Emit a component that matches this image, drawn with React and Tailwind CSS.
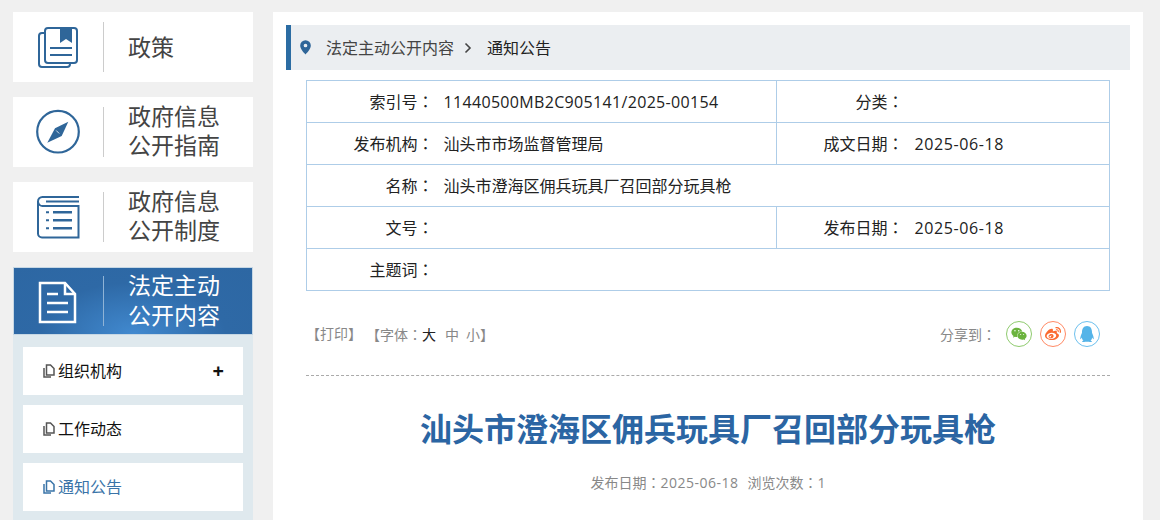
import { FaWeixin, FaWeibo, FaQq } from 'react-icons/fa';

const BookIcon = () => (
  <svg width="90" height="70" viewBox="0 0 90 70" fill="none" stroke="#2f6699" strokeWidth="2">
    <path d="M32 21h-3a3 3 0 0 0-3 3v28a3 3 0 0 0 3 3h25a3 3 0 0 0 3-3v-1" />
    <rect x="32" y="16" width="32" height="35" rx="3" />
    <path d="M47 16h12v15l-6-4-6 4z" fill="#2f6699" stroke="none" />
    <path d="M37 36h22M37 43h22" />
  </svg>
);

const CompassIcon = () => (
  <svg width="90" height="70" viewBox="0 0 90 70" fill="none">
    <circle cx="45" cy="34.700" r="20.800" stroke="#2f6699" strokeWidth="2.200" />
    <path d="M55.300 24.700L48.700 39 34.300 45.700 42 31.300z" fill="#2f6699" />
    <path d="M43.200 33.500l3 3" stroke="#fff" strokeWidth="0.800" />
  </svg>
);

const ListIcon = () => (
  <svg width="90" height="70" viewBox="0 0 90 70" fill="none" stroke="#2f6699" strokeWidth="2">
    <path d="M66 15H29.500a4.500 4.500 0 0 0-4.500 4.500V51.500a4 4 0 0 0 4 4H65.500V24H30a4.500 4.500 0 0 1-5-4.500" />
    <path d="M33 19.500h33" />
    <path d="M40 30.300h19M40 38.300h19M40 46.300h19" strokeWidth="2.500" />
    <path d="M33 30.300h3M33 38.300h3M33 46.300h3" />
  </svg>
);

const DocIcon = () => (
  <svg width="90" height="68" viewBox="0 0 90 68" fill="none" stroke="#fff" strokeWidth="2.500">
    <path d="M27 16h25l10 11v28H27z" />
    <path d="M52 16v11h10" />
    <path d="M34 27h11M34 36h21M34 45h21" />
  </svg>
);

const PageIcon = ({ color }) => (
  <svg width="12" height="14" viewBox="0 0 12 14" fill="none" stroke={color} strokeWidth="1.500" className="shrink-0">
    <path d="M1 4v9h7" />
    <path d="M3.500 1h4L11 4.500V11H3.500z" />
  </svg>
);

const PinIcon = () => (
  <svg width="11" height="15" viewBox="0 0 12 16">
    <path fillRule="evenodd" fill="#2f6699" d="M6 0a5.800 5.800 0 0 1 5.800 5.800C11.800 9.500 8 13.500 6 15.500 4 13.500.2 9.500.2 5.800A5.800 5.800 0 0 1 6 0zm0 3.800a2 2 0 1 0 0 4 2 2 0 0 0 0-4z" />
  </svg>
);

// the SC face sits this colon in the corner of its cell, the reference has it centred
const Colon = () => <span className="font-['Noto_Sans_CJK_TC']">：</span>;

const navItems = [
  { icon: <BookIcon />, lines: ['政策'] },
  { icon: <CompassIcon />, lines: ['政府信息', '公开指南'] },
  { icon: <ListIcon />, lines: ['政府信息', '公开制度'] },
];

const Label = ({ children }) => (
  <td className="border-y border-l border-[#aecde8] text-right">
    {children}<Colon />
  </td>
);

const Value = ({ children, colSpan, className = 'pl-[10px]' }) => (
  <td colSpan={colSpan} className={`border-y border-r border-[#aecde8] ${className}`}>{children}</td>
);

export default function App() {
  return (
    <div
      className="flex h-[520px] w-[1160px] overflow-hidden bg-[#f0f0f0] pl-[13px] pt-3 text-[#222] [text-spacing-trim:space-all]"
      style={{ fontFamily: '"Open Sans", "Noto Sans CJK SC", sans-serif' }}
    >
      {/* Sidebar */}
      <div className="w-[240px] shrink-0">
        {navItems.map((item) => (
          <div key={item.lines[0] + item.lines[1]} className="mb-[15px] flex h-[70px] items-center bg-white">
            <div className="w-[90px] shrink-0">{item.icon}</div>
            <div className="h-[50px] w-px bg-[#ccc]" />
            <div className={`ml-[24px] text-[23px] leading-[30px] text-[#444] ${item.lines.length > 1 ? 'pb-[3px]' : ''}`}>
              {item.lines.map((l) => <div key={l} className="last:-mt-px">{l}</div>)}
            </div>
          </div>
        ))}

        <div className="flex h-[68px] items-center border border-[#c6d7e4] bg-[radial-gradient(ellipse_at_50%_100%,#4189cf_0%,#2e69a6_55%,#2d67a3_100%)]">
          <div className="-ml-px w-[90px] shrink-0"><DocIcon /></div>
          <div className="h-[50px] w-px bg-[#8fb3d6]" />
          <div className="ml-[24px] pb-[3px] text-[23px] leading-[30px] text-white">
            <div>法定主动</div>
            <div>公开内容</div>
          </div>
        </div>

        <div className="flex h-[200px] flex-col gap-[10px] bg-[#dfe9ee] px-[10px] pt-[12px]">
          <div className="flex h-[48px] items-center bg-white pl-[20px] pr-[19px] text-base text-[#111]">
            <PageIcon color="#555" />
            <span className="ml-[3px] flex-1">组织机构</span>
            <span className="text-xl font-bold leading-none">+</span>
          </div>
          <div className="flex h-[48px] items-center bg-white pl-[20px] text-base text-[#111]">
            <PageIcon color="#555" />
            <span className="ml-[3px]">工作动态</span>
          </div>
          <div className="flex h-[48px] items-center bg-white pl-[20px] text-base text-[#3a74a8]">
            <PageIcon color="#3a74a8" />
            <span className="ml-[3px]">通知公告</span>
          </div>
        </div>
      </div>

      {/* Main */}
      <div className="ml-[20px] h-[600px] w-[870px] shrink-0 bg-white px-[13px] pt-[13px]">
        <div className="flex h-[45px] items-center border-l-[5px] border-[#2b6ca3] bg-[#ebeef1] pl-[9px] text-base">
          <PinIcon />
          <span className="ml-[15px] text-[#444]">法定主动公开内容</span>
          <svg width="8" height="12" viewBox="0 0 8 12" fill="none" stroke="#444" strokeWidth="1.600" className="ml-[10px]">
            <path d="M1.500 1.500L6 6l-4.500 4.500" />
          </svg>
          <span className="ml-[15px] text-[#222]">通知公告</span>
        </div>

        <div className="mx-[20px] mt-[10px]">
          <table className="w-[804px] table-fixed border-collapse text-base text-[#222] [&_td]:h-[42px]">
            <colgroup>
              <col className="w-[127px]" />
              <col className="w-[343px]" />
              <col className="w-[127px]" />
              <col />
            </colgroup>
            <tbody>
              <tr>
                <Label>索引号</Label>
                <Value><span className="tracking-[0.33px]">11440500MB2C905141/2025-00154</span></Value>
                <Label>分类</Label>
                <Value />
              </tr>
              <tr>
                <Label>发布机构</Label>
                <Value>汕头市市场监督管理局</Value>
                <Label>成文日期</Label>
                <Value className="pl-[11px]"><span className="tracking-[0.6px]">2025-06-18</span></Value>
              </tr>
              <tr>
                <Label>名称</Label>
                <Value colSpan={3}>汕头市澄海区佣兵玩具厂召回部分玩具枪</Value>
              </tr>
              <tr>
                <Label>文号</Label>
                <Value />
                <Label>发布日期</Label>
                <Value className="pl-[11px]"><span className="tracking-[0.6px]">2025-06-18</span></Value>
              </tr>
              <tr>
                <Label>主题词</Label>
                <Value colSpan={3} />
              </tr>
            </tbody>
          </table>

          {/* Tools */}
          <div className="flex h-[85px] items-start justify-between border-b border-dashed border-[#aaa] pt-[30px] text-sm text-[#888]">
            <div className="mt-[3px] flex">
              <span>【打印】</span>
              <span className="ml-[4px]">【字体<Colon /><span className="text-[#222]">大</span><span className="ml-[9px]">中</span><span className="ml-[7px]">小</span>】</span>
            </div>
            <div className="flex items-center pr-[10px]">
              <span>分享到<Colon /></span>
              <span className="ml-[10px] flex h-[26px] w-[26px] items-center justify-center rounded-full border border-[#8fcb6e] text-[16px] text-[#6cb33f]"><FaWeixin /></span>
              <span className="ml-[8px] flex h-[26px] w-[26px] items-center justify-center rounded-full border border-[#ff8a65] text-[16px] text-[#fb6a30]"><FaWeibo /></span>
              <span className="ml-[8px] flex h-[26px] w-[26px] items-center justify-center rounded-full border border-[#6cc0ee] text-[16px] text-[#55b4e8]"><FaQq /></span>
            </div>
          </div>

          <h1 className="mt-[31px] text-center text-[32px] font-bold leading-[44px] text-[#2b65a3]">
            汕头市澄海区佣兵玩具厂召回部分玩具枪
          </h1>
          <div className="mt-[21px] text-center text-sm text-[#888]">
            <span>发布日期<Colon /><span className="tracking-[0.5px]">2025-06-18</span></span>
            <span className="ml-[9px]">浏览次数<Colon />1</span>
          </div>
        </div>
      </div>
    </div>
  );
}
